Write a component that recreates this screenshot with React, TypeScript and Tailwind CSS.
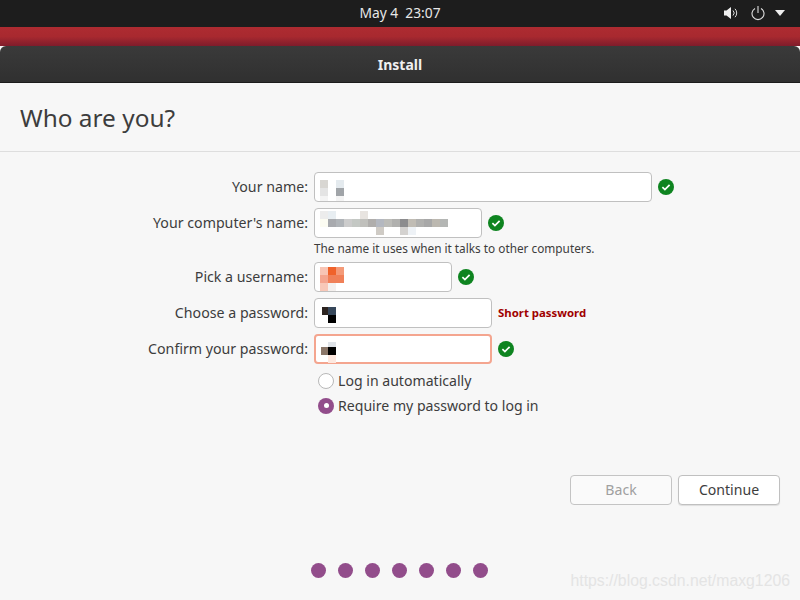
const font = "font-['Noto_Sans',sans-serif]"

type Block = [number, number, string]

// mosaic blur over the typed values, cells are 8px
function Mosaic({ blocks }: { blocks: Block[] }) {
  return (
    <svg className="absolute left-0 top-0" width={140} height={28} viewBox="0 0 140 28">
      {blocks.map(([x, y, c], i) => (
        <rect key={i} x={x} y={y} width={8} height={8} fill={c} />
      ))}
    </svg>
  )
}

function Check() {
  return (
    <svg width="16" height="16" viewBox="0 0 16 16" className="ml-[6px] shrink-0">
      <circle cx="8" cy="8" r="8" fill="#0e8420" />
      <path d="M4.4 8.2l2.5 2.4 4.7-4.8" fill="none" stroke="#fff" strokeWidth="1.7" />
    </svg>
  )
}

function Row({ label, width, focus, after, mb, blocks }: {
  label: string
  width: string
  focus?: boolean
  after?: React.ReactNode
  mb: string
  blocks: Block[]
}) {
  return (
    <div className={`flex items-center ${mb}`}>
      <div className="w-[308px] shrink-0 text-right text-[14.2px] text-[#3d3d3d]">{label}</div>
      <div className={`relative ml-[6px] h-[30px] rounded-[4px] bg-white ${width} ${focus ? 'border-2 border-[#f4a58f]' : 'border border-[#c0c0c0]'}`}>
        <Mosaic blocks={blocks} />
      </div>
      {after}
    </div>
  )
}

const strip = ['#a8aaae', '#b0b4b8', '#cccccc', '#c4c8c4', '#c0c0bc', '#b0aeac', '#b4b8c0', '#bcbcb8', '#b0b0ae', '#8c8c8e', '#c0bcb4', '#b0b0ae', '#a8a8a8', '#bcb8b0', '#b4b6b4']

export default function App() {
  return (
    <div className={`relative flex h-[600px] w-[800px] flex-col overflow-hidden bg-[#f7f7f7] ${font}`}>
      <div className="relative flex h-[27px] shrink-0 items-center justify-center bg-[#1d1d1d] text-[13.8px] text-[#e8e8e8]">
        <span className="whitespace-pre">May 4  23:07</span>
        <div className="absolute right-[15px] top-[5px] flex items-center">
          <svg width="16" height="16" viewBox="0 0 16 16" className="mr-[11px]">
            <path d="M1 5.5H3.5L8 2v12L3.5 10.5H1z" fill="#f0f0f0" />
            <path d="M10 5.5a3.5 3.5 0 0 1 0 5M12 3.8a6 6 0 0 1 0 8.4" fill="none" stroke="#ddd" strokeWidth="1" />
          </svg>
          <svg width="16" height="16" viewBox="0 0 16 16" className="mr-[9px]">
            <path d="M5 3.4a6 6 0 1 0 6 0" fill="none" stroke="#ddd" strokeWidth="1.1" />
            <path d="M8 1v7" fill="none" stroke="#ddd" strokeWidth="1.1" />
          </svg>
          <svg width="10" height="6" viewBox="0 0 10 6">
            <path d="M0 0h10L5 6z" fill="#eee" />
          </svg>
        </div>
      </div>

      <div className="h-[19px] shrink-0 bg-gradient-to-b from-[#ad2b31] via-[#a8292f] to-[#7f1c2b]" />

      <div className="flex h-[37px] shrink-0 items-center justify-center rounded-t-[6px] border-b border-[#1c1c1c] bg-gradient-to-b from-[#3a3a3a] to-[#303030] text-[14px] font-bold text-[#f0f0f0]">
        Install
      </div>

      <div className="flex h-[69px] shrink-0 items-center border-b border-[#dedede] pl-[20px] pt-[2px] text-[24.4px] text-[#3d3d3d]">
        Who are you?
      </div>

      <div className="pt-[20px]">
        <Row
          label="Your name:"
          width="w-[338px]"
          mb="mb-[6px]"
          after={<Check />}
          blocks={[[5, 7, '#d8d6d2'], [5, 15, '#e4e4e4'], [21, 7, '#e4eaee'], [21, 15, '#a0a4a8'], [5, 23, '#f4f4f4'], [21, 23, '#f4f4f4']]}
        />
        <Row
          label="Your computer's name:"
          width="w-[168px]"
          mb="mb-0"
          after={<Check />}
          blocks={[
            [5, 2, '#ececec'],
            [13, 2, '#e8eef2'],
            [5, 10, '#fcfcf2'],
            [45, 2, '#e8e4e0'],
            ...strip.map((c, i): Block => [13 + i * 8, 10, c]),
            [61, 18, '#cfcbc5'],
            [85, 18, '#d4d2d0'],
            [93, 18, '#eef2f6'],
          ]}
        />
        <div className="pb-[6px] pl-[314px] pt-[3px] text-[11.8px] leading-[15px] text-[#3d3d3d]">
          The name it uses when it talks to other computers.
        </div>
        <Row
          label="Pick a username:"
          width="w-[138px]"
          mb="mb-[6px]"
          after={<Check />}
          blocks={[[5, 4, '#f8c4b4'], [13, 4, '#f0622a'], [21, 4, '#f49a78'], [5, 12, '#f4a58f'], [13, 12, '#f08058'], [21, 12, '#f08058'], [5, 20, '#f8c8b8'], [13, 20, '#f4f0ee']]}
        />
        <Row
          label="Choose a password:"
          width="w-[178px]"
          mb="mb-[6px]"
          after={<div className="ml-[6px] text-[11.4px] font-bold text-[#a00000]">Short password</div>}
          blocks={[[7, 8, '#2c2420'], [13, 8, '#36475a'], [13, 16, '#000000']]}
        />
        <Row
          label="Confirm your password:"
          width="w-[178px]"
          mb="mb-0"
          focus
          after={<Check />}
          blocks={[[12, 6, '#dfe3e8'], [5, 11, '#8a7668'], [12, 11, '#000000'], [12, 19, '#fde8df']]}
        />

        <div className="pl-[318px] pt-[4px] text-[14.1px] text-[#3d3d3d]">
          <div className="flex h-[25px] items-center">
            <span className="h-4 w-4 rounded-full border border-[#b8b8b8] bg-white" />
            <span className="ml-[4px]">Log in automatically</span>
          </div>
          <div className="flex h-[25px] items-center">
            <span className="flex h-4 w-4 items-center justify-center rounded-full bg-[#924d8b]">
              <span className="h-[5px] w-[5px] rounded-full bg-white" />
            </span>
            <span className="ml-[4px]">Require my password to log in</span>
          </div>
        </div>
      </div>

      <div className="mt-[57px] flex justify-end gap-[6px] pr-[20px] text-[14.1px]">
        <div className="flex h-[30px] w-[102px] items-center justify-center rounded-[4px] border border-[#c4c4c4] bg-[#fafafa] text-[#a0a0a0]">Back</div>
        <div className="flex h-[30px] w-[102px] items-center justify-center rounded-[4px] border border-[#c0c0c0] bg-white text-[#3d3d3d] shadow-[0_1px_1px_rgba(0,0,0,0.1)]">Continue</div>
      </div>

      <div className="mt-[58px] flex gap-[12px] pl-[311px]">
        {[0, 1, 2, 3, 4, 5, 6].map((i) => (
          <span key={i} className="h-[15px] w-[15px] rounded-full bg-[#924d8b]" />
        ))}
      </div>

      <div className="absolute bottom-[7px] right-[10px] font-['Liberation_Sans',sans-serif] text-[15.8px] text-[#e4e4e4]">
        https://blog.csdn.net/maxg1206
      </div>
    </div>
  )
}
